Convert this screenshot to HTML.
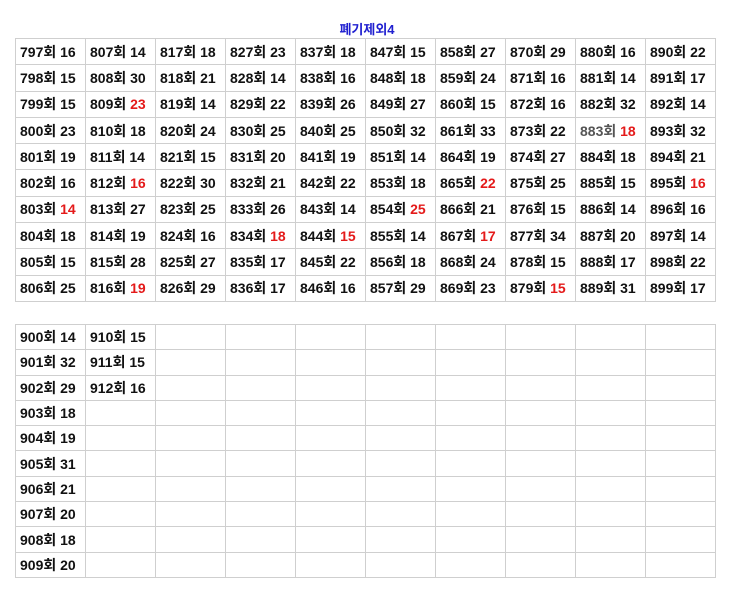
<!DOCTYPE html>
<html><head><meta charset="utf-8"><style>
body{margin:0;background:#fff;width:734px;height:598px;overflow:hidden;font-family:"Liberation Sans","Noto Sans CJK KR",sans-serif;}
.t{position:absolute;left:15px;border-collapse:collapse;table-layout:fixed;width:701px;}
.t td{border:1px solid #cfcfcf;width:69px;padding:0 0 0 4px;font-weight:bold;font-size:14px;color:#111;white-space:nowrap;box-sizing:border-box;}
#a{top:38px}#a td{height:26.3px}
#b{top:324px}#b td{height:25.3px}
.r{color:#e41a1a}.g{color:#555}
h1{position:absolute;top:19px;left:0;width:734px;text-align:center;margin:0;font-size:13px;color:#2020d0;font-weight:bold}
</style></head><body>
<h1>폐기제외4</h1>
<table class="t" id="a">
<tr><td>797회 16</td><td>807회 14</td><td>817회 18</td><td>827회 23</td><td>837회 18</td><td>847회 15</td><td>858회 27</td><td>870회 29</td><td>880회 16</td><td>890회 22</td></tr>
<tr><td>798회 15</td><td>808회 30</td><td>818회 21</td><td>828회 14</td><td>838회 16</td><td>848회 18</td><td>859회 24</td><td>871회 16</td><td>881회 14</td><td>891회 17</td></tr>
<tr><td>799회 15</td><td>809회 <span class="r">23</span></td><td>819회 14</td><td>829회 22</td><td>839회 26</td><td>849회 27</td><td>860회 15</td><td>872회 16</td><td>882회 32</td><td>892회 14</td></tr>
<tr><td>800회 23</td><td>810회 18</td><td>820회 24</td><td>830회 25</td><td>840회 25</td><td>850회 32</td><td>861회 33</td><td>873회 22</td><td><span class="g">883회</span> <span class="r">18</span></td><td>893회 32</td></tr>
<tr><td>801회 19</td><td>811회 14</td><td>821회 15</td><td>831회 20</td><td>841회 19</td><td>851회 14</td><td>864회 19</td><td>874회 27</td><td>884회 18</td><td>894회 21</td></tr>
<tr><td>802회 16</td><td>812회 <span class="r">16</span></td><td>822회 30</td><td>832회 21</td><td>842회 22</td><td>853회 18</td><td>865회 <span class="r">22</span></td><td>875회 25</td><td>885회 15</td><td>895회 <span class="r">16</span></td></tr>
<tr><td>803회 <span class="r">14</span></td><td>813회 27</td><td>823회 25</td><td>833회 26</td><td>843회 14</td><td>854회 <span class="r">25</span></td><td>866회 21</td><td>876회 15</td><td>886회 14</td><td>896회 16</td></tr>
<tr><td>804회 18</td><td>814회 19</td><td>824회 16</td><td>834회 <span class="r">18</span></td><td>844회 <span class="r">15</span></td><td>855회 14</td><td>867회 <span class="r">17</span></td><td>877회 34</td><td>887회 20</td><td>897회 14</td></tr>
<tr><td>805회 15</td><td>815회 28</td><td>825회 27</td><td>835회 17</td><td>845회 22</td><td>856회 18</td><td>868회 24</td><td>878회 15</td><td>888회 17</td><td>898회 22</td></tr>
<tr><td>806회 25</td><td>816회 <span class="r">19</span></td><td>826회 29</td><td>836회 17</td><td>846회 16</td><td>857회 29</td><td>869회 23</td><td>879회 <span class="r">15</span></td><td>889회 31</td><td>899회 17</td></tr>
</table>
<table class="t" id="b">
<tr><td>900회 14</td><td>910회 15</td><td></td><td></td><td></td><td></td><td></td><td></td><td></td><td></td></tr>
<tr><td>901회 32</td><td>911회 15</td><td></td><td></td><td></td><td></td><td></td><td></td><td></td><td></td></tr>
<tr><td>902회 29</td><td>912회 16</td><td></td><td></td><td></td><td></td><td></td><td></td><td></td><td></td></tr>
<tr><td>903회 18</td><td></td><td></td><td></td><td></td><td></td><td></td><td></td><td></td><td></td></tr>
<tr><td>904회 19</td><td></td><td></td><td></td><td></td><td></td><td></td><td></td><td></td><td></td></tr>
<tr><td>905회 31</td><td></td><td></td><td></td><td></td><td></td><td></td><td></td><td></td><td></td></tr>
<tr><td>906회 21</td><td></td><td></td><td></td><td></td><td></td><td></td><td></td><td></td><td></td></tr>
<tr><td>907회 20</td><td></td><td></td><td></td><td></td><td></td><td></td><td></td><td></td><td></td></tr>
<tr><td>908회 18</td><td></td><td></td><td></td><td></td><td></td><td></td><td></td><td></td><td></td></tr>
<tr><td>909회 20</td><td></td><td></td><td></td><td></td><td></td><td></td><td></td><td></td><td></td></tr>
</table>
</body></html>
